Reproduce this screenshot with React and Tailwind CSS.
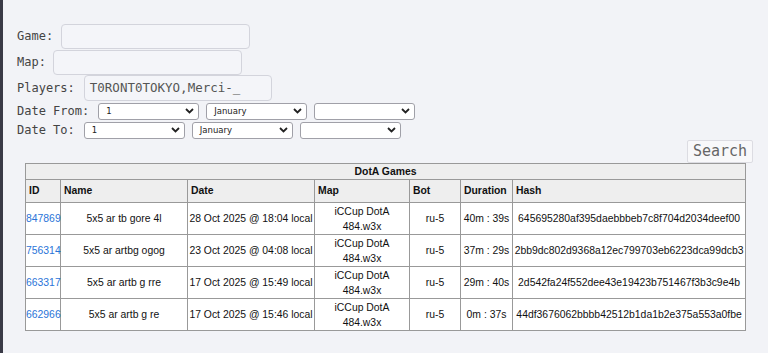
import React from "react";

const Chevron = () => (
  <svg className="pointer-events-none absolute right-[4px] top-1/2 -translate-y-1/2" width="9" height="6" viewBox="0 0 9 6">
    <path d="M1 1 L4.5 4.5 L8 1" fill="none" stroke="#222" strokeWidth="1.8" />
  </svg>
);

const Sel = ({ w, value }) => (
  <div className={`relative h-[17px] ${w} rounded-[3px] border border-[#a0a0a8] bg-white`}>
    <span className="absolute left-[7px] top-1/2 -translate-y-1/2 font-['DejaVu_Sans',sans-serif] text-[8.5px] text-[#222]">{value}</span>
    <Chevron />
  </div>
);

const rows = [
  ["847869", "5x5 ar tb gore 4l", "28 Oct 2025 @ 18:04 local", "ru-5", "40m : 39s", "645695280af395daebbbeb7c8f704d2034deef00"],
  ["756314", "5x5 ar artbg ogog", "23 Oct 2025 @ 04:08 local", "ru-5", "37m : 29s", "2bb9dc802d9368a12ec799703eb6223dca99dcb3"],
  ["663317", "5x5 ar artb g rre", "17 Oct 2025 @ 15:49 local", "ru-5", "29m : 40s", "2d542fa24f552dee43e19423b751467f3b3c9e4b"],
  ["662966", "5x5 ar artb g re", "17 Oct 2025 @ 15:46 local", "ru-5", "0m : 37s", "44df3676062bbbb42512b1da1b2e375a553a0fbe"],
];

export default function App() {
  const label = "text-[12px] text-[#444] whitespace-pre";
  const td = "border border-[#999] px-[1px] py-0 text-center leading-[15px] h-[32px]";
  const th = "border border-[#999] px-[3px] text-left font-bold h-[23px]";
  return (
    <div className="min-h-[353px] bg-[#f2f3f7] border-l-[3px] border-[#3a3a46] font-['DejaVu_Sans_Mono',monospace]">
      <div className="pl-[14px] pr-[15px] pt-[23px]">
        <div className="flex h-[26px] items-center gap-[8px]">
          <span className={label}>Game:</span>
          <div className="h-[25px] w-[189px] rounded-[4px] border border-[#d3d4dc] bg-[#f4f5f9]" />
        </div>
        <div className="flex h-[26px] items-center gap-[7px]">
          <span className={label}>Map:</span>
          <div className="h-[25px] w-[189px] rounded-[4px] border border-[#d3d4dc] bg-[#f4f5f9]" />
        </div>
        <div className="flex h-[26px] items-center gap-[9px]">
          <span className={label}>Players:</span>
          <div className="flex h-[26px] w-[188px] items-center rounded-[4px] border border-[#d3d4dc] bg-[#f4f5f9] pl-[5px] text-[12.5px] text-[#555]">
            T0RONT0TOKYO,Merci-_
          </div>
        </div>
        <div className="mt-[1px] flex h-[18px] items-center">
          <span className={label}>Date From:</span>
          <div className="ml-[9px] flex gap-[7px]">
            <Sel w="w-[101px]" value="1" />
            <Sel w="w-[101px]" value="January" />
            <Sel w="w-[101px]" value="" />
          </div>
        </div>
        <div className="mt-[1px] flex h-[18px] items-center">
          <span className={label}>Date To:</span>
          <div className="ml-[9px] flex gap-[7px]">
            <Sel w="w-[101px]" value="1" />
            <Sel w="w-[101px]" value="January" />
            <Sel w="w-[101px]" value="" />
          </div>
        </div>
        <div className="mt-[1px] flex justify-end">
          <div className="flex h-[23px] w-[66px] items-center justify-center rounded-[2px] border border-[#dcdce2] bg-[#f8f8fa] text-[15px] text-[#666]">
            Search
          </div>
        </div>
        <table className="ml-[8px] w-[720px] table-fixed border-collapse border border-[#888] bg-white font-['Liberation_Sans',Arial,sans-serif] text-[10.4px] text-[#111]">
          <colgroup>
            <col className="w-[35px]" />
            <col className="w-[127px]" />
            <col className="w-[127px]" />
            <col className="w-[95px]" />
            <col className="w-[51px]" />
            <col className="w-[52px]" />
            <col className="w-[233px]" />
          </colgroup>
          <thead>
            <tr className="bg-[#eeeeee]">
              <th colSpan={7} className="h-[16px] border border-[#999] text-center font-bold leading-[14px]">DotA Games</th>
            </tr>
            <tr className="bg-[#eeeeee]">
              <th className={th}>ID</th>
              <th className={th}>Name</th>
              <th className={th}>Date</th>
              <th className={th}>Map</th>
              <th className={th}>Bot</th>
              <th className={th}>Duration</th>
              <th className={th}>Hash</th>
            </tr>
          </thead>
          <tbody>
            {rows.map((r) => (
              <tr key={r[0]}>
                <td className={`${td} !text-left !px-0`}>
                  <span className="text-[#2a74d8]">{r[0]}</span>
                </td>
                <td className={td}>{r[1]}</td>
                <td className={`${td} whitespace-nowrap`}>{r[2]}</td>
                <td className={td}>
                  iCCup DotA
                  <br />
                  484.w3x
                </td>
                <td className={td}>{r[3]}</td>
                <td className={`${td} whitespace-nowrap`}>{r[4]}</td>
                <td className={`${td} whitespace-nowrap`}>{r[5]}</td>
              </tr>
            ))}
          </tbody>
        </table>
      </div>
    </div>
  );
}
